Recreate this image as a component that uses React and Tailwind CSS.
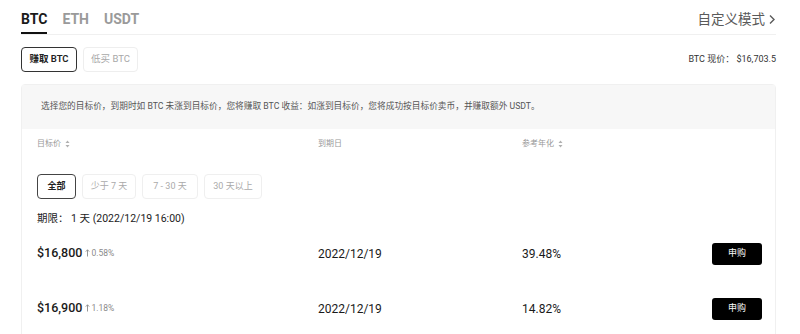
import React from 'react';

const rows = [
  { price: '$16,800', pct: '0.58%', date: '2022/12/19', apy: '39.48%' },
  { price: '$16,900', pct: '1.18%', date: '2022/12/19', apy: '14.82%' },
];

function SortIcon() {
  return (
    <svg width="5" height="8" viewBox="0 0 5 8" className="ml-[4px] inline-block">
      <path d="M2.5 0.5 L4.5 3 H0.5 Z" fill="#b0b0b0" />
      <path d="M2.5 7.5 L4.5 5 H0.5 Z" fill="#b0b0b0" />
    </svg>
  );
}

function UpArrow() {
  return (
    <svg width="5" height="8" viewBox="0 0 5 8" className="mr-[1px]">
      <path d="M2.5 0.8 V7.5 M0.8 2.6 L2.5 0.8 L4.2 2.6" stroke="#8a8a8a" strokeWidth="0.9" fill="none" />
    </svg>
  );
}

export default function App() {
  return (
    <div className="w-[800px] h-[334px] overflow-hidden bg-white pl-[21px] pr-[24px] font-['Roboto','Noto_Sans_CJK_SC',sans-serif] text-[#1a1a1a]">
      {/* Tabs */}
      <div className="flex items-start justify-between h-[35px] border-b border-[#f0f0f0]">
        <div className="flex gap-[15px]">
          <div className="h-[34px] pt-[9px] leading-[20px] text-[14px] font-bold border-b-2 border-[#111]">BTC</div>
          <div className="h-[34px] pt-[9px] leading-[20px] text-[14px] font-bold text-[#9a9a9a]">ETH</div>
          <div className="h-[34px] pt-[9px] leading-[20px] text-[14px] font-bold text-[#9a9a9a]">USDT</div>
        </div>
        <div className="flex items-center h-[34px] pt-[4px] text-[13.5px] text-[#5a5a5a]">
          自定义模式
          <svg width="8" height="11" viewBox="0 0 8 11" className="ml-[3px]">
            <path d="M2 1.5 L6 5.5 L2 9.5" stroke="#5a5a5a" strokeWidth="1.4" fill="none" />
          </svg>
        </div>
      </div>

      {/* Mode buttons */}
      <div className="flex items-center justify-between mt-[12px]">
        <div className="flex gap-[6px]">
          <button className="w-[56px] h-[25px] rounded-[4px] border border-[#333] text-[9.5px] font-semibold text-[#222]">赚取 BTC</button>
          <button className="w-[55px] h-[25px] rounded-[4px] border border-[#eeeeee] text-[9.5px] text-[#a8a8a8]">低买 BTC</button>
        </div>
        <div className="text-[9px] text-[#333]">BTC 现价：&nbsp;$16,703.5</div>
      </div>

      {/* Panel */}
      <div className="mt-[12px] border border-[#f0f0f0] rounded-t-[4px]">
        <div className="h-[44px] bg-[#f7f7f7] px-[19px] flex items-center text-[8.7px] text-[#555]">
          选择您的目标价，到期时如 BTC 未涨到目标价，您将赚取 BTC 收益：如涨到目标价，您将成功按目标价卖币，并赚取额外 USDT。
        </div>
        <div className="pl-[15px] pr-[14px]">
          <div className="grid grid-cols-[281px_204px_1fr_auto] items-center h-[30px] text-[8px] text-[#999]">
            <div className="flex items-center">目标价<SortIcon /></div>
            <div>到期日</div>
            <div className="flex items-center">参考年化<SortIcon /></div>
            <div />
          </div>

          <div className="flex gap-[6px] mt-[15px]">
            <button className="w-[39px] h-[25px] rounded-[4px] border border-[#444] text-[9px] font-semibold text-[#222]">全部</button>
            <button className="w-[54px] h-[25px] rounded-[4px] border border-[#efefef] text-[9px] text-[#aaa]">少于 7 天</button>
            <button className="w-[56px] h-[25px] rounded-[4px] border border-[#efefef] text-[9px] text-[#aaa]">7 - 30 天</button>
            <button className="w-[58px] h-[25px] rounded-[4px] border border-[#efefef] text-[9px] text-[#aaa]">30 天以上</button>
          </div>

          <div className="mt-[13px] h-[14px] flex items-center text-[10.5px] text-[#222]">
            期限：&nbsp;1 天 (2022/12/19 16:00)
          </div>

          {rows.map((r) => (
            <div key={r.price} className="grid grid-cols-[281px_204px_1fr_auto] items-center h-[55px]">
              <div className="flex items-baseline">
                <span className="text-[12.5px] font-medium">{r.price}</span>
                <span className="flex items-center ml-[3px] text-[8.5px] text-[#8a8a8a]">
                  <UpArrow />
                  {r.pct}
                </span>
              </div>
              <div className="text-[12px]">{r.date}</div>
              <div className="text-[12px]">{r.apy}</div>
              <button className="w-[50px] h-[22px] rounded-[3px] bg-black text-white text-[9px] mr-[-1px]">申购</button>
            </div>
          ))}
        </div>
      </div>
    </div>
  );
}
